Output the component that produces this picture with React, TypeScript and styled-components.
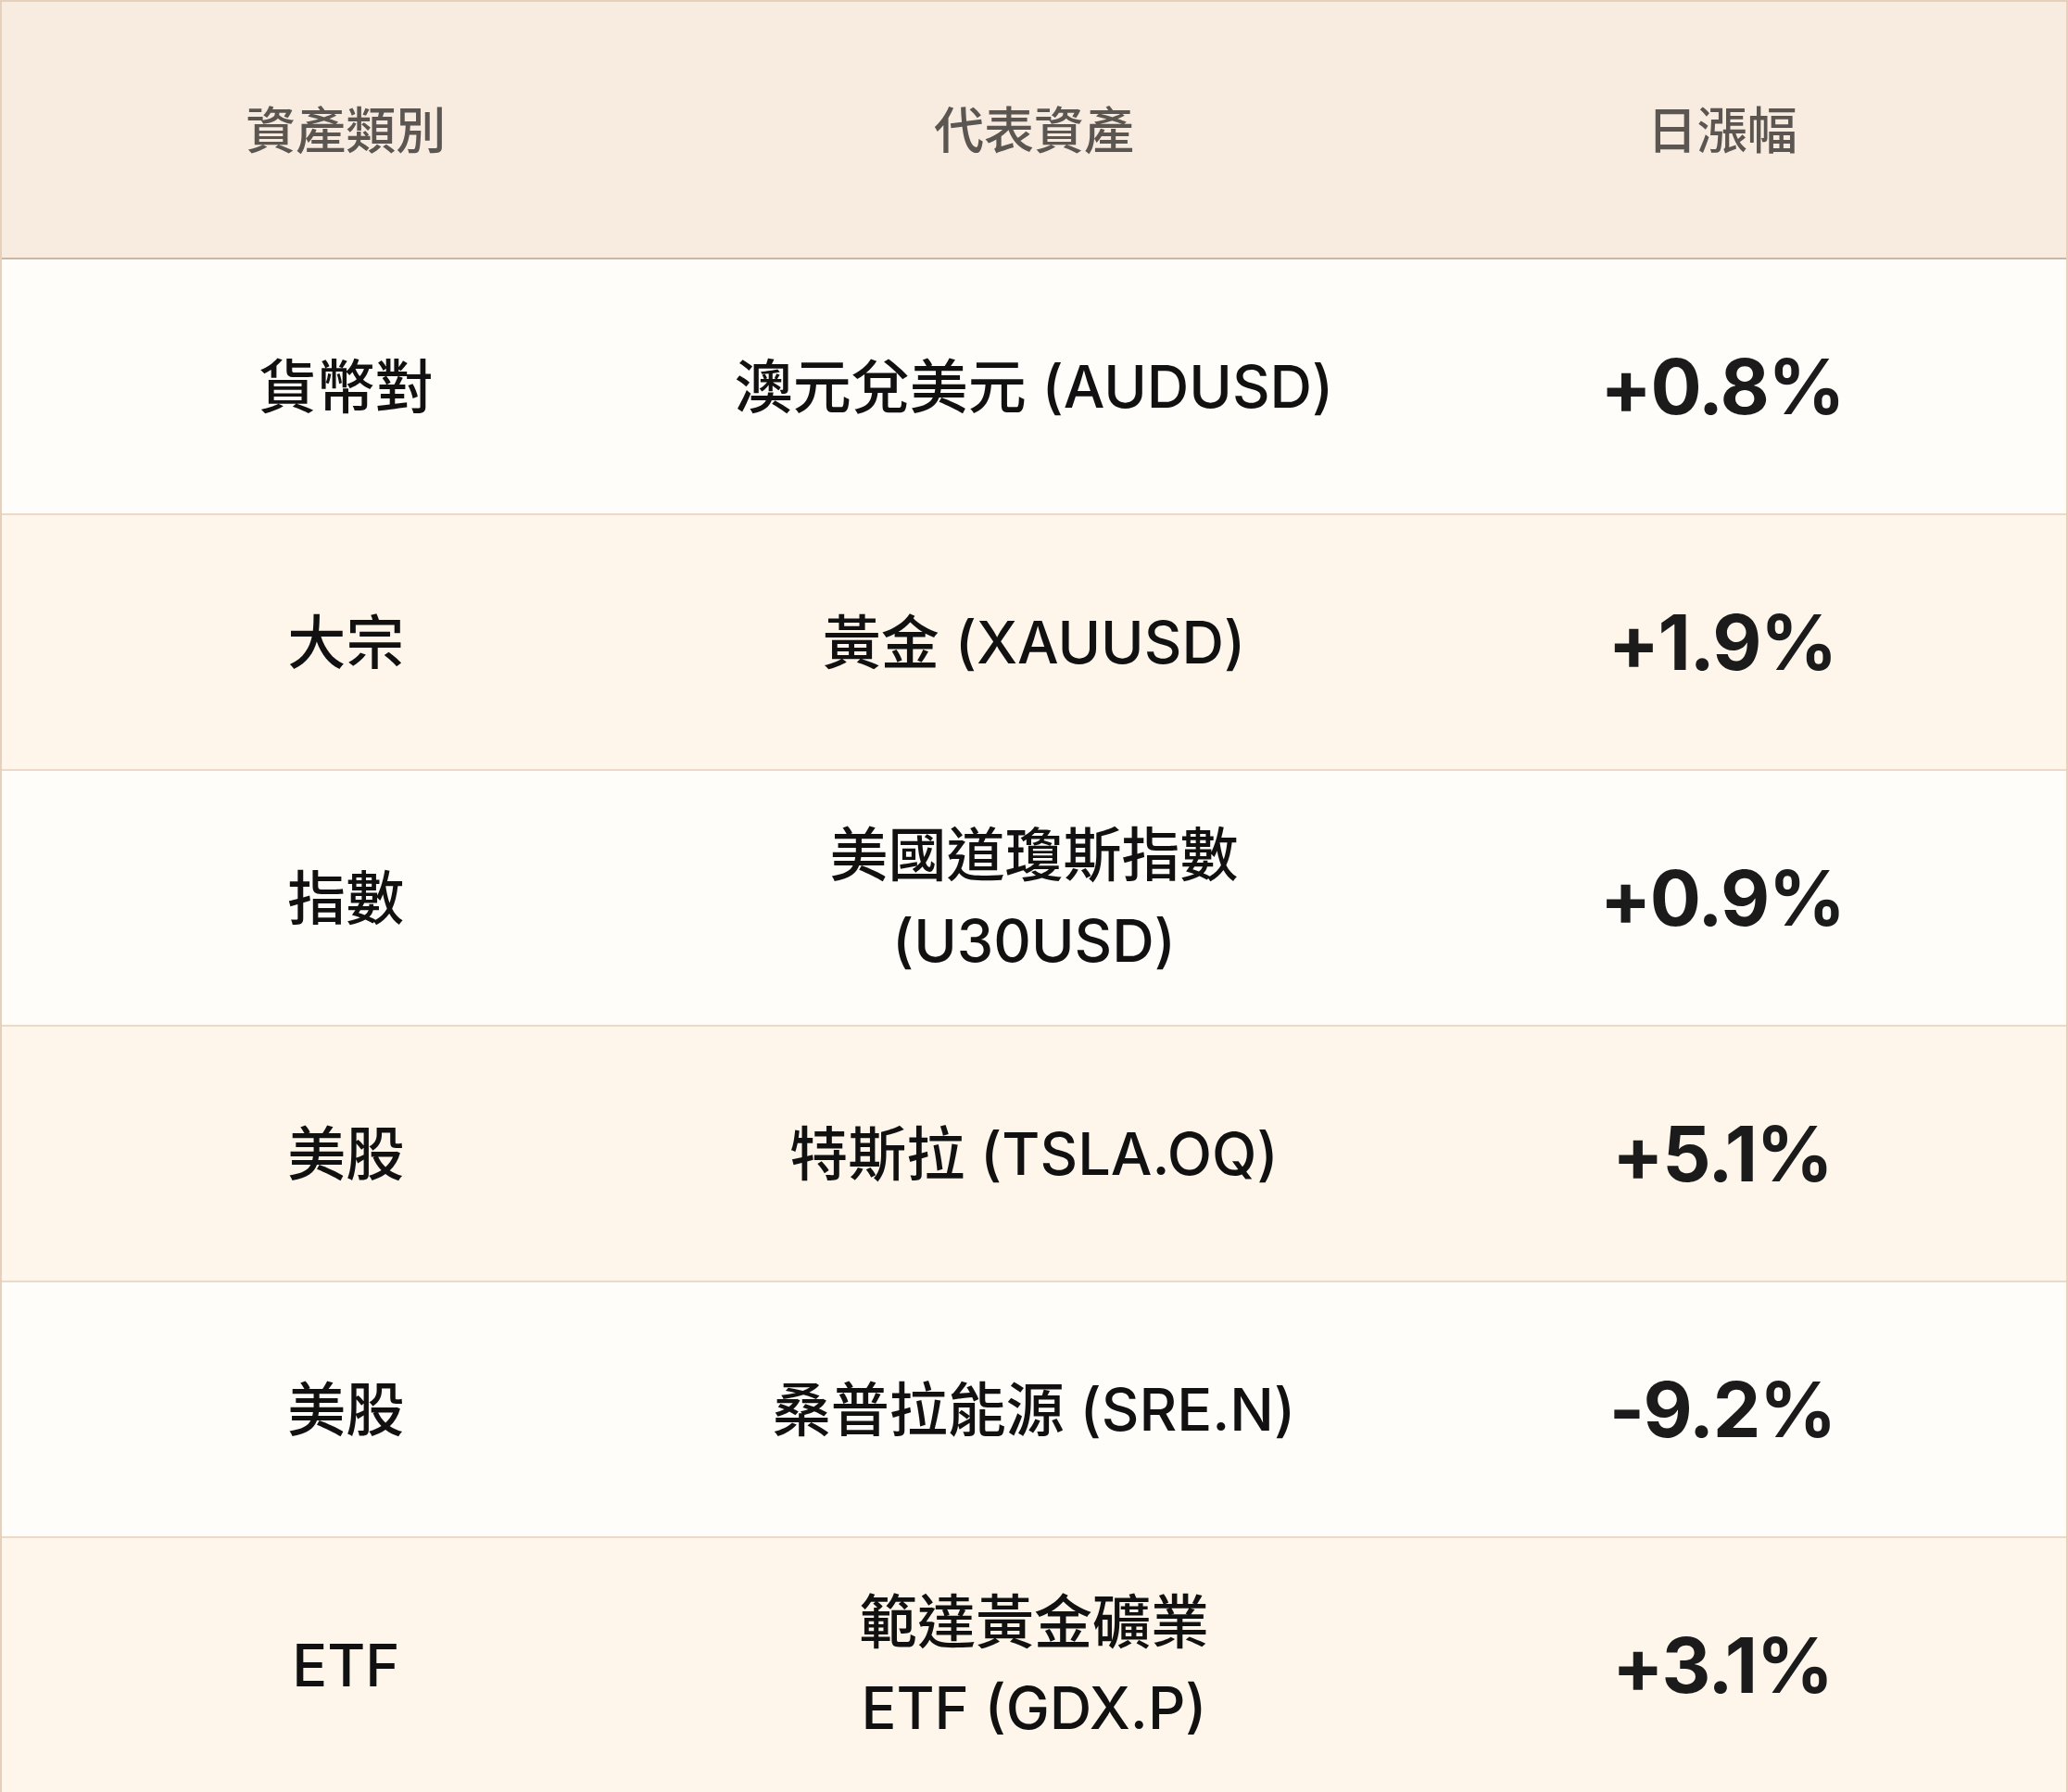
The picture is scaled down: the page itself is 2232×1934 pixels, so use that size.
import styled, { createGlobalStyle } from 'styled-components'

const GlobalStyle = createGlobalStyle`
  body {
    margin: 0;
    background: #fefdf9;
    font-family: Inter, "Noto Sans CJK TC", sans-serif;
  }
`

const Table = styled.div`
  width: 2232px;
  box-sizing: border-box;
  border: 2px solid #e6cfbb;
  display: flex;
  flex-direction: column;
`
const HeadRow = styled.div`
  display: grid;
  grid-template-columns: repeat(3, 1fr);
  align-items: center;
  height: 276px;
  background: #f8ebdf;
  border-bottom: 2px solid #cdb5a4;
`
const HeadCell = styled.div`
  text-align: center;
  font-size: 54px;
  color: #5b5651;
  font-weight: 500;
  padding-bottom: 6px;
`
const Row = styled.div<{ $alt: boolean }>`
  display: grid;
  grid-template-columns: repeat(3, 1fr);
  align-items: center;
  height: 274px;
  background: ${(p) => (p.$alt ? '#fef6ea' : '#fefdf9')};
  & + & {
    border-top: 2px solid #ecd9c8;
  }
`
const Cell = styled.div`
  text-align: center;
  font-size: 63px;
  font-weight: 500;
  line-height: 1.47;
  color: #111111;
`
const Asset = styled(Cell)`
  padding: 0 28px;
`
const Change = styled.div`
  text-align: center;
  font-size: 82px;
  font-weight: 700;
  color: #1b1b1b;
  letter-spacing: -1.5px;
`

const rows = [
  { kind: '貨幣對', asset: '澳元兌美元 (AUDUSD)', change: '+0.8%' },
  { kind: '大宗', asset: '黃金 (XAUUSD)', change: '+1.9%' },
  { kind: '指數', asset: '美國道瓊斯指數 (U30USD)', change: '+0.9%' },
  { kind: '美股', asset: '特斯拉 (TSLA.OQ)', change: '+5.1%' },
  { kind: '美股', asset: '桑普拉能源 (SRE.N)', change: '-9.2%' },
  { kind: 'ETF', asset: '範達黃金礦業 ETF\u00a0(GDX.P)', change: '+3.1%' },
]

export default function App() {
  return (
    <>
      <GlobalStyle />
      <Table>
        <HeadRow>
          <HeadCell>資產類別</HeadCell>
          <HeadCell>代表資產</HeadCell>
          <HeadCell>日漲幅</HeadCell>
        </HeadRow>
        {rows.map((r, i) => (
          <Row key={i} $alt={i % 2 === 1}>
            <Cell>{r.kind}</Cell>
            <Asset>{r.asset}</Asset>
            <Change>{r.change}</Change>
          </Row>
        ))}
      </Table>
    </>
  )
}
